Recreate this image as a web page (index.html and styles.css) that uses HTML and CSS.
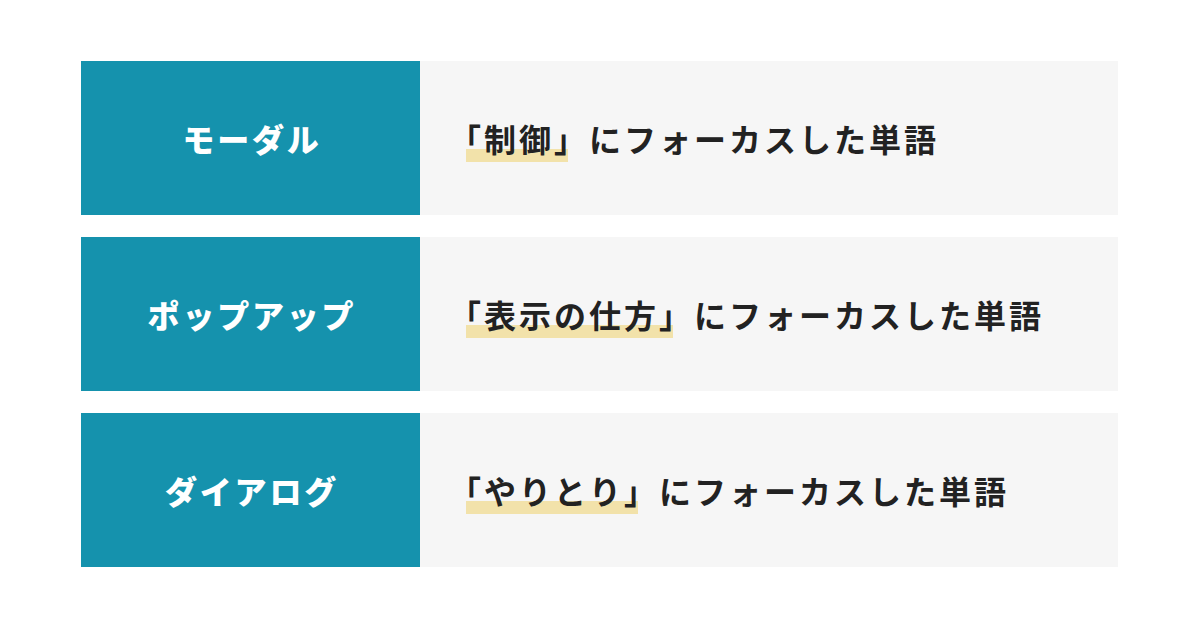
FILE: index.html
```html
<!DOCTYPE html>
<html lang="ja">
<head>
<meta charset="utf-8">
<link rel="stylesheet" href="styles.css">
</head>
<body>
<div class="list">
  <div class="row">
    <div class="label">モーダル</div>
    <div class="desc"><span class="hl">「制御」</span>にフォーカスした単語</div>
  </div>
  <div class="row">
    <div class="label">ポップアップ</div>
    <div class="desc"><span class="hl">「表示の仕方」</span>にフォーカスした単語</div>
  </div>
  <div class="row">
    <div class="label">ダイアログ</div>
    <div class="desc"><span class="hl">「やりとり」</span>にフォーカスした単語</div>
  </div>
</div>
</body>
</html>
```
FILE: styles.css
```css
html, body {
  margin: 0;
  padding: 0;
  background: #ffffff;
}
body {
  width: 1200px;
  height: 628px;
  overflow: hidden;
  font-family: "Noto Sans CJK JP", "Noto Sans", sans-serif;
}
.list {
  display: flex;
  flex-direction: column;
  gap: 22px;
  padding: 61px 82px 0 81px;
}
.row {
  display: flex;
  height: 154px;
}
.label {
  width: 339px;
  flex: none;
  background: #1592ad;
  color: #ffffff;
  font-size: 32px;
  font-weight: 900;
  letter-spacing: 2.8px;
  display: flex;
  align-items: center;
  justify-content: center;
  padding-left: 3px;
  box-sizing: border-box;
}
.desc {
  flex: 1;
  background: #f6f6f6;
  color: #222222;
  font-size: 32px;
  font-weight: 700;
  letter-spacing: 3px;
  display: flex;
  align-items: center;
  padding-left: 29px;
  isolation: isolate;
  white-space: nowrap;
}
.hl {
  position: relative;
}
.hl::after {
  content: "";
  position: absolute;
  left: 17px;
  right: 21px;
  bottom: -1px;
  height: 13px;
  background: #f2e2aa;
  z-index: -1;
}
```
